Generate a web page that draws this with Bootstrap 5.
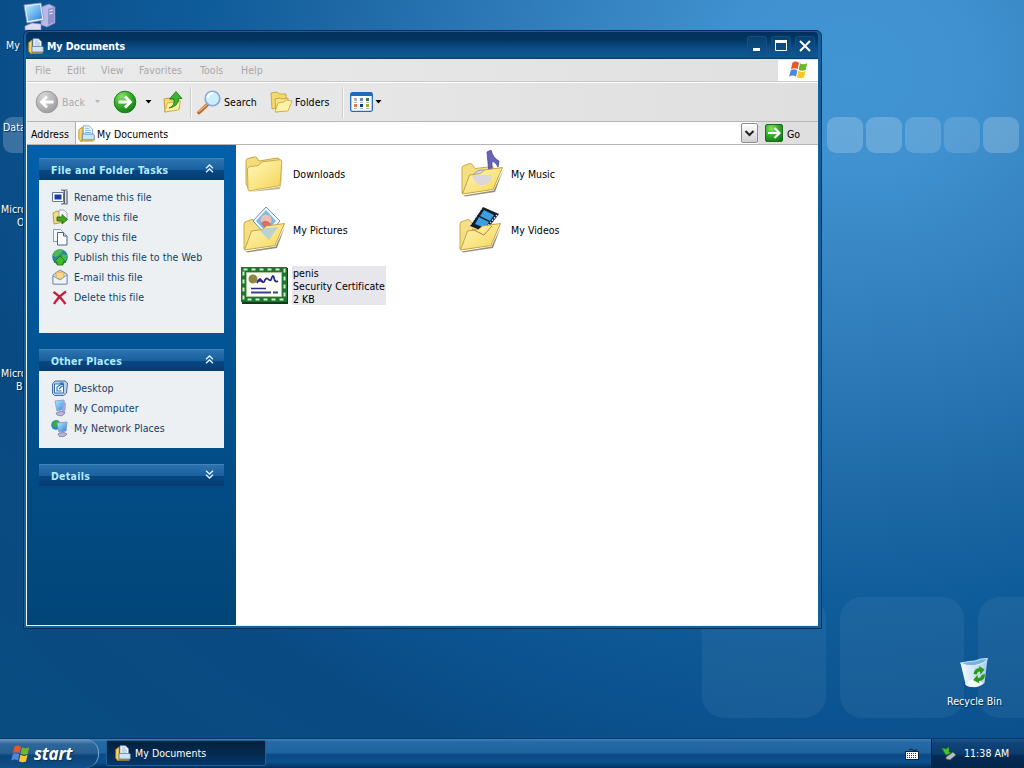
<!DOCTYPE html>
<html lang="en">
  <head>
    <meta charset="UTF-8" />
    <meta name="viewport" content="width=device-width, initial-scale=1.0" />
    <title>My Documents</title>
    <link
      href="https://cdn.jsdelivr.net/npm/bootstrap@5.3.3/dist/css/bootstrap.min.css"
      rel="stylesheet"
    />
    <style>
      body {
        width: 1024px;
        height: 768px;
        font-family: "DejaVu Sans Condensed", "DejaVu Sans", sans-serif;
        font-stretch: condensed;
        font-size: 10.5px;
        line-height: 13px;
        letter-spacing: 0.05px;
        color: #000;
        background: radial-gradient(ellipse 900px 750px at 850px 70px,
          #4295d3 0%, #3f91cf 14%, #3785c2 27%, #2b77b5 42%, #1c67a4 58%, #0f5c9a 72%, #0b5390 87%, #0a4a83 100%, #094c80 125%);
      }
      svg { display: block; flex: none; }

      /* Wallpaper squares */
      .tile { position: absolute; background: rgba(255, 255, 255, .2); border-radius: 9px; width: 36px; height: 36px; top: 117px; }
      .tile-big { position: absolute; background: rgba(255, 255, 255, .055); border-radius: 22px; width: 124px; height: 121px; top: 597px; }
      .tile-cut { width: 46px; border-radius: 22px 0 0 22px; }

      /* Desktop icons */
      .desk { position: absolute; color: #fff; text-shadow: 1px 1px 1px #002a50; white-space: nowrap; }

      /* Explorer window */
      #explorer {
        position: absolute;
        left: 23px;
        top: 30px;
        width: 799px;
        height: 599px;
        padding: 1px 3px 2px 2px;
        border: 1px solid #032f5c;
        border-radius: 6px 6px 0 0;
        background: #14609c;
      }
      .title-bar {
        height: 27px;
        padding: 1px 3px 0 2px;
        border-radius: 4px 4px 0 0;
        font-weight: bold;
        letter-spacing: -0.05px;
        color: #fff;
        background: linear-gradient(#02305c, #023561 28%, #0c4f89 62%, #115891 92%, #063a6b);
      }
      .win-btn { width: 20px; height: 20px; border: 1px solid #11508a; border-radius: 3px; background: linear-gradient(#07406f, #0f548d); }
      .win-body { height: 567px; border-left: 1px solid #f4f8fc; border-bottom: 1px solid #e6eef5; background: #fff; }
      .menu-row { height: 23px; color: #a9a9a9; background: linear-gradient(90deg, #ebebeb, #e0e0e0); border-bottom: 1px solid #c9c9c9; }
      .flag-box { width: 40px; height: 21px; background: #fff; }
      .tool-row { height: 40px; background: linear-gradient(90deg, #ebebeb, #dfdfdf); border-top: 1px solid #fff; border-bottom: 1px solid #b5b5b5; }
      .tool-sep { width: 1px; height: 31px; background: #cfcfcf; border-right: 1px solid #f8f8f8; box-sizing: content-box; }
      .addr-row { height: 23px; background: linear-gradient(90deg, #ebebeb, #dfdfdf); border-bottom: 1px solid #b5b5b5; }
      .addr-row span { padding-top: 2px; }
      .addr-field { width: 683px; height: 22px; background: #fff; border-left: 1px solid #b0b0b0; }
      .drop-btn { width: 17px; height: 20px; border: 1px solid #8c8c8c; border-radius: 2px; background: linear-gradient(#fff, #d0d0d0); }

      /* Task pane */
      .task-pane { width: 209px; padding: 13px 12px 0; background: linear-gradient(#0160a9, #024c86 70%, #024678); }
      .task-head {
        height: 22px;
        padding: 1px 10px 0 12px;
        font-weight: bold;
        letter-spacing: 0.28px;
        color: #b4ecff;
        border-top: 1px solid #3f83bb;
        background: linear-gradient(#2d73b0, #19609f 50%, #084783 54%, #063b72);
      }
      .task-list { padding: 7px 12px; background: #ecf0f2; color: #0f3f68; letter-spacing: 0.09px; }
      .task-list div { height: 20px; }
      .task-list span { margin-left: 5px; }
      .tasks-a { height: 153px; }
      .tasks-b { height: 77px; }

      .file-area { padding: 0 4px; }
      .file-item { height: 56px; padding-top: 2px; }
      .picked { width: 94px; height: 39px; background: #e6e6ec; padding-left: 1px; }
      .picked span { position: relative; top: 1px; }

      /* Taskbar */
      #taskbar {
        position: absolute;
        left: 0;
        bottom: 0;
        width: 1024px;
        height: 30px;
        color: #fff;
        border-top: 1px solid #0b3966;
        background: linear-gradient(#3b83bd, #2769a6 10%, #1f649f 48%, #0b4b86 52%, #0d508c 80%, #032f5a);
      }
      #start {
        width: 99px;
        height: 29px;
        border-radius: 0 14px 14px 0;
        border-right: 1px solid #79a9d0;
        background: linear-gradient(#6b9ac4, #2e669b 18%, #285f92 48%, #0c4479 58%, #11508a);
        font: italic bold 17px "Open Sans", sans-serif;
        letter-spacing: -0.2px;
        text-shadow: 1px 1px 1px #10304f;
      }
      .task-btn { width: 160px; height: 26px; margin: 1px 0 0 7px; border: 1px solid #1d5f99; background: linear-gradient(#02203f, #042a4f 50%, #03376a); border-radius: 2px; }
      .task-btn span { padding-top: 1px; }
      .tray { width: 93px; height: 29px; border-left: 1px solid #021e3b; background: linear-gradient(#1b568c, #0f4479 15%, #0b3c6d 50%, #042a52 60%, #03264a); }
    </style>
  </head>
  <body class="position-relative overflow-hidden">

    <!--icon symbols start here-->
    <svg width="0" height="0" class="position-absolute">
      <defs>
        <linearGradient id="gold" x1="0" y1="0" x2="1" y2="1">
          <stop offset="0" stop-color="#fff8bd" />
          <stop offset="1" stop-color="#f6d455" />
        </linearGradient>
        <linearGradient id="screen" x1="0" y1="0" x2="1" y2="1">
          <stop offset="0" stop-color="#b8f0ff" />
          <stop offset="1" stop-color="#2c7fe0" />
        </linearGradient>
        <linearGradient id="bin" x1="0" y1="0" x2="1" y2="0">
          <stop offset="0" stop-color="#f4faff" />
          <stop offset="1" stop-color="#a8cdec" />
        </linearGradient>
        <radialGradient id="green" cx=".35" cy=".25" r=".85">
          <stop offset="0" stop-color="#8be06a" />
          <stop offset=".5" stop-color="#35ab2c" />
          <stop offset="1" stop-color="#117513" />
        </radialGradient>
        <radialGradient id="grey" cx=".35" cy=".25" r=".85">
          <stop offset="0" stop-color="#d8d8d8" />
          <stop offset="1" stop-color="#989898" />
        </radialGradient>
      </defs>
      <symbol id="docs" viewBox="0 0 16 16">
        <path d="M.8 4.500L4 2v13H2.500L.8 13.500z" fill="#fbd863" stroke="#b98a22" stroke-width=".8" />
        <path d="M5 .8h5.500l3 3V10H5z" fill="#fff" stroke="#7d93b5" stroke-width=".8" />
        <path d="M6.500 3h4M6.500 5h5.500M6.500 7h5.500" stroke="#7fb2e8" />
        <path d="M4 8.500h10.500l.8 1v4.500H4z" fill="#cfe3fa" stroke="#5f7dab" stroke-width=".8" />
        <path d="M2 15h12.500" stroke="#d29f2c" stroke-width="1.300" />
      </symbol>
      <symbol id="flag" viewBox="0 0 20 18">
        <path d="M4.500 1.500C7 0 9 .5 11 1.800L9.600 8.200C7.500 7 5.500 7 3 8.200z" fill="#e8562a" />
        <path d="M12 2.300c2.500 1.200 4.500 1.200 7.300 0L17.700 9c-2.600 1.200-4.800 1-7.100-.3z" fill="#70b52c" />
        <path d="M2.800 9.200c2.500-1.300 4.500-1 6.600.2L8 15.700c-2.200-1.400-4.200-1.400-6.900-.2z" fill="#4d86dc" />
        <path d="M10.400 9.800c2.200 1.300 4.500 1.500 7.100.3L16 16.500c-2.600 1.200-4.800 1-7-.3z" fill="#fbc722" />
      </symbol>
      <symbol id="closed-folder" viewBox="0 0 40 40">
        <path d="M4 38l33-5.500 1.500-24L36 35z" fill="#8d7a3c" opacity=".55" />
        <path d="M2 7q0-2 2-2.500L10 3q2-.3 3 1l2 3 18-3q2.500 0 2.500 2v4L4 34 2 30z" fill="#f5dc78" stroke="#b69736" stroke-width=".8" />
        <path d="M3.500 15q0-2 2-2.300l9-1.200 3-3.500 18.500-2.300q2 0 1.800 2L36 31.500 5 37q-1 0-1-2z" fill="url(#gold)" stroke="#c8a53e" stroke-width=".9" />
      </symbol>
      <symbol id="folder-back" viewBox="0 0 46 48">
        <path d="M3 43L3 18q0-2 2-2.500l6-2q2 0 3 2l2 3 18-2V35z" fill="#f6df82" stroke="#b99b3b" stroke-width=".8" />
      </symbol>
      <symbol id="folder-front" viewBox="0 0 46 48">
        <path d="M4.500 45.500l30-5 9.500-20-8 21.500-30 4.500z" fill="#6e6335" opacity=".7" />
        <path d="M3.500 44l7-19 11-1.500 4-3.500L43.500 17.500 34 39.500z" fill="url(#gold)" stroke="#c09c35" stroke-width=".9" />
      </symbol>
      <symbol id="computer" viewBox="0 0 34 30">
        <path d="M19 5l8-3 6 3v16l-8 4-6-2z" fill="#b9b9e6" stroke="#7c7cb7" stroke-width=".7" />
        <path d="M26 7l6-2v15l-6 3z" fill="#8f91cd" />
        <path d="M27 9l4-1M27 12l4-1" stroke="#e6e6ff" />
        <path d="M2 3l17-2 3 17-17 3z" fill="#eef4ff" stroke="#8791c8" stroke-width=".8" />
        <path d="M3.500 4.500l14.500-2 2.200 14-14 2.500z" fill="url(#screen)" />
        <path d="M3 24l7-3 9 1v6H3z" fill="#dcdcf2" stroke="#8b8bb7" stroke-width=".6" />
      </symbol>
      <symbol id="chevrons" viewBox="0 0 9 9">
        <path d="M1 4.200L4.500 1 8 4.200M1 8.200L4.500 5 8 8.200" fill="none" stroke="#e0f6ff" stroke-width="1.300" />
      </symbol>
    </svg>
    <!--icon symbols end here-->

    <!--wallpaper-->
    <div class="tile" style="left: 3px"></div>
    <div class="tile" style="left: 827px"></div>
    <div class="tile" style="left: 866px"></div>
    <div class="tile" style="left: 905px; opacity: .8"></div>
    <div class="tile" style="left: 944px; opacity: .65"></div>
    <div class="tile" style="left: 983px"></div>
    <div class="tile-big" style="left: 702px"></div>
    <div class="tile-big" style="left: 840px"></div>
    <div class="tile-big tile-cut" style="left: 978px"></div>

    <!--desktop icons-->
    <svg class="desk" style="left: 22px; top: 2px" width="34" height="30"><use href="#computer" /></svg>
    <div class="desk" style="left: 6px; top: 39px">My</div>
    <div class="desk" style="left: 3px; top: 121px">Data</div>
    <div class="desk" style="left: 1px; top: 203px">Micro</div>
    <div class="desk" style="left: 17px; top: 216px">O</div>
    <div class="desk" style="left: 1px; top: 367px">Micro</div>
    <div class="desk" style="left: 16px; top: 380px">B</div>
    <div class="desk d-flex flex-column align-items-center" style="left: 947px; top: 657px">
      <svg width="32" height="32" viewBox="0 0 32 32">
        <path d="M2.500 6l11 2L29.500 2l-3 24q-5 5-13 4-5-1-6-3z" fill="url(#bin)" />
        <path d="M2.500 6q10-2 14-2 7-3 13-2.500-2 5-13 7-8 1-14-2.500z" fill="#79b1e5" stroke="#eef8ff" stroke-width=".8" />
        <path d="M7 27l9-6 9 5q-4 4-11 4-5 0-7-3z" fill="#f5fbff" />
        <path d="M15.500 17q1-6 6-6l-.5-2 5.500 3.500-4 5-.5-3q-3 0-3 3zM27 17q0 7-6 7l.5 2.500-6.500-3.500 4.500-5 .5 3q3 0 3.500-3z" fill="#2c9a16" />
      </svg>
      <div style="margin-top: 6px">Recycle Bin</div>
    </div>

    <!--explorer window start here-->
    <div id="explorer">
      <div class="title-bar d-flex align-items-center">
        <svg width="16" height="16"><use href="#docs" /></svg>
        <span class="me-auto" style="margin-left: 3px">My Documents</span>
        <div class="d-flex" style="gap: 4px">
          <div class="win-btn"><svg width="18" height="18"><path d="M5 12.500h7" stroke="#fff" stroke-width="3" /></svg></div>
          <div class="win-btn"><svg width="18" height="18"><path d="M3.500 4v9.500h11V4" fill="none" stroke="#fff" /><path d="M3 4.500h12" stroke="#fff" stroke-width="3" /></svg></div>
          <div class="win-btn"><svg width="18" height="18"><path d="M4 4l10 10M14 4L4 14" stroke="#fff" stroke-width="2" /></svg></div>
        </div>
      </div>

      <div class="win-body d-flex flex-column">
        <div class="menu-row d-flex align-items-center">
          <div class="d-flex flex-fill">
            <span style="width: 32px; margin-left: 8px">File</span>
            <span style="width: 34px">Edit</span>
            <span style="width: 38px">View</span>
            <span style="width: 61px">Favorites</span>
            <span style="width: 41px">Tools</span>
            <span>Help</span>
          </div>
          <div class="flag-box d-flex justify-content-center align-items-center">
            <svg width="20" height="18"><use href="#flag" /></svg>
          </div>
        </div>

        <div class="tool-row d-flex align-items-center">
          <svg width="24" height="24" viewBox="0 0 24 24" style="margin-left: 8px">
            <circle cx="12" cy="12" r="10.800" fill="url(#grey)" stroke="#9b9b9b" />
            <path d="M18.500 12H7M12 6.500L6.500 12l5.500 5.500" fill="none" stroke="#fff" stroke-width="2.800" />
          </svg>
          <span style="width: 32px; margin-left: 3px; color: #ababab">Back</span>
          <svg width="7" height="4"><path d="M1 0h5L3.500 3z" fill="#b5b5b5" /></svg>
          <svg width="24" height="24" viewBox="0 0 24 24" style="margin-left: 12px">
            <circle cx="12" cy="12" r="10.800" fill="url(#green)" stroke="#1d7f1c" />
            <path d="M5.500 12H17M12 6.500l5.500 5.500-5.500 5.500" fill="none" stroke="#fff" stroke-width="2.800" />
          </svg>
          <svg width="7" height="4" style="margin-left: 8px"><path d="M.5 0h6l-3 3.500z" fill="#000" /></svg>
          <svg width="21" height="24" viewBox="0 0 21 24" style="margin-left: 11px">
            <path d="M1 9l5-1 2 2 8-1v10L2 22z" fill="#f5dc70" stroke="#b58f2b" stroke-width=".8" />
            <path d="M1.500 22l3-9 13-2-2 9z" fill="#fff1a0" stroke="#c9a53b" stroke-width=".8" />
            <path d="M6 18q6-2 5-9H6.500L13 1.500 19 8.500h-3.500Q16 16 6 18z" fill="#3cb52f" stroke="#187414" stroke-width=".8" />
          </svg>
          <div class="tool-sep" style="margin-left: 6px"></div>
          <svg width="26" height="26" viewBox="0 0 26 26" style="margin-left: 5px">
            <path d="M10.500 15.500L2 23.500" stroke="#b5672a" stroke-width="3.600" stroke-linecap="round" />
            <path d="M10 15.500L2 22.500" stroke="#f0b070" stroke-width="1.400" stroke-linecap="round" />
            <circle cx="15.500" cy="9.500" r="7.300" fill="#cdeffd" stroke="#86a9dc" stroke-width="1.600" />
            <path d="M10.500 9q1-5 6-5" fill="none" stroke="#fff" stroke-width="2.500" />
          </svg>
          <span style="width: 45px; margin-left: 1px">Search</span>
          <svg width="24" height="24" viewBox="0 0 24 24">
            <path d="M2 3l6-1 2 2h7v12L3 19z" fill="#f5d96a" stroke="#c39b2e" stroke-width=".8" />
            <path d="M6 9l5-1 2 1 6-1v12L7 22z" fill="#f9e283" stroke="#c39b2e" stroke-width=".8" />
            <path d="M6 22l3-9 6-1 2-2 6 1-4 10z" fill="#fff3a5" stroke="#c9a53b" stroke-width=".8" />
          </svg>
          <span style="width: 45px; margin-left: 2px">Folders</span>
          <div class="tool-sep" style="margin-left: 2px"></div>
          <svg width="23" height="20" viewBox="0 0 23 20" style="margin-left: 6px">
            <rect x=".7" y=".7" width="21.600" height="18.600" rx="1.500" fill="#fff" stroke="#2468b8" stroke-width="1.300" />
            <path d="M1 2.500h21" stroke="#2468b8" stroke-width="3" />
            <path d="M4 7.500h3" stroke="#a7b0c8" stroke-width="3" />
            <path d="M4 13.500h3" stroke="#e07b45" stroke-width="3" />
            <path d="M10 7.500h3" stroke="#6688c8" stroke-width="3" />
            <path d="M10 13.500h3" stroke="#123a94" stroke-width="3" />
            <path d="M16 7.500h3" stroke="#268440" stroke-width="3" />
            <path d="M16 13.500h3" stroke="#b2a62b" stroke-width="3" />
            <path d="M4 10.500h3m3 0h3m3 0h3M4 16.500h3m3 0h3m3 0h3" stroke="#a9b8d0" />
          </svg>
          <svg width="7" height="4" style="margin-left: 2px"><path d="M.5 0h6l-3 3.500z" fill="#000" /></svg>
        </div>

        <div class="addr-row d-flex align-items-center">
          <span style="width: 44px; margin-left: 4px">Address</span>
          <div class="addr-field d-flex align-items-center">
            <svg width="17" height="17" style="margin-left: 2px"><use href="#docs" /></svg>
            <span class="me-auto" style="margin-left: 2px">My Documents</span>
            <div class="drop-btn"><svg width="15" height="18"><path d="M3.500 7l4 4 4-4" fill="none" stroke="#222" stroke-width="2" /></svg></div>
          </div>
          <svg width="18" height="18" viewBox="0 0 18 18" style="margin-left: 7px">
            <rect x=".5" y=".5" width="17" height="17" rx="1.500" fill="url(#green)" stroke="#177018" />
            <path d="M3 9h11M9.500 4l5 5-5 5" fill="none" stroke="#fff" stroke-width="2.200" />
          </svg>
          <span style="margin-left: 4px">Go</span>
        </div>

        <div class="d-flex flex-fill">
          <div class="task-pane">
            <div class="task-head d-flex align-items-center justify-content-between">
              <span>File and Folder Tasks</span>
              <svg class="mb-1" width="9" height="9"><use href="#chevrons" /></svg>
            </div>
            <div class="task-list tasks-a">
              <div class="d-flex align-items-center">
                <svg width="18" height="18" viewBox="0 0 18 18">
                  <path d="M1.500 4.500h11v9h-11z" fill="#fff" stroke="#5f7898" />
                  <path d="M3.500 6.500h7v5h-7z" fill="#153f9f" />
                  <path d="M10 2h2l1 1 1-1h2.500M10 16h2l1-1 1 1h2.500M13.500 3v12M16 3v13" fill="none" stroke="#56606c" stroke-width="1.200" />
                </svg>
                <span>Rename this file</span>
              </div>
              <div class="d-flex align-items-center">
                <svg width="18" height="18" viewBox="0 0 18 18">
                  <path d="M2 5l4-2 2 1 5-1v11L3 16z" fill="#f4dd82" stroke="#9c8b48" stroke-width=".8" />
                  <path d="M8 2h5l3 3v6H8z" fill="#f5f7fb" stroke="#8998ac" stroke-width=".8" />
                  <path d="M6 9h5V6.500l5.500 5L11 16v-3H6z" fill="#43a51f" stroke="#1d6510" stroke-width=".8" />
                </svg>
                <span>Move this file</span>
              </div>
              <div class="d-flex align-items-center">
                <svg width="18" height="18" viewBox="0 0 18 18">
                  <path d="M2.500 1.500h7l2 2v10h-9z" fill="#f4f8fd" stroke="#8d9fb8" />
                  <path d="M6.500 4.500h6l3.500 3.500v9H6.500z" fill="#fff" stroke="#46658d" />
                  <path d="M12.500 4.500V8H16" fill="#cfe0f2" stroke="#46658d" />
                </svg>
                <span>Copy this file</span>
              </div>
              <div class="d-flex align-items-center">
                <svg width="18" height="18" viewBox="0 0 18 18">
                  <circle cx="9" cy="9" r="7.800" fill="#2f80a8" />
                  <path d="M3 4q4-4 9-2l-2 4-5 3-3-1zM11 6l5 1-1 6-4-2z" fill="#49bc4c" />
                  <path d="M9 8l6 6h-3v3H6v-3H3z" fill="#43bd26" stroke="#17700f" stroke-width=".8" />
                </svg>
                <span class="text-nowrap">Publish this file to the Web</span>
              </div>
              <div class="d-flex align-items-center">
                <svg width="18" height="18" viewBox="0 0 18 18">
                  <path d="M2 7l7-5 7 4v10H2z" fill="#d6e4f5" stroke="#6f85a6" stroke-width=".9" />
                  <path d="M5 4h8v7H5z" fill="#f8d789" stroke="#c28e45" stroke-width=".7" />
                  <path d="M2 8l7 4 7-5v9H2z" fill="#eef5fd" stroke="#7289ab" stroke-width=".8" />
                </svg>
                <span>E-mail this file</span>
              </div>
              <div class="d-flex align-items-center">
                <svg width="18" height="18" viewBox="0 0 18 18">
                  <path d="M2.500 4Q9 8 14.500 16M15 3.500Q7 9 3 16" fill="none" stroke="#c41e3d" stroke-width="2.300" />
                </svg>
                <span>Delete this file</span>
              </div>
            </div>

            <div class="task-head d-flex align-items-center justify-content-between" style="margin-top: 16px">
              <span>Other Places</span>
              <svg class="mb-1" width="9" height="9"><use href="#chevrons" /></svg>
            </div>
            <div class="task-list tasks-b">
              <div class="d-flex align-items-center">
                <svg width="18" height="18" viewBox="0 0 18 18">
                  <path d="M4 2h10l2.500 2-1 10-3 2.500H3.500l-2-2V5z" fill="#b9d3ec" stroke="#4a6f97" />
                  <path d="M3.500 5h9v9h-9z" fill="#fff" stroke="#2a6faf" />
                  <path d="M10.500 12H6V8l6-4M8.500 4H12v4M8 10l3-3" fill="none" stroke="#2673b9" stroke-width="1.100" />
                </svg>
                <span>Desktop</span>
              </div>
              <div class="d-flex align-items-center">
                <svg width="18" height="18" viewBox="0 0 18 18">
                  <path d="M4 2l9-1 1 9-8 2z" fill="url(#screen)" stroke="#9aa6ce" />
                  <path d="M12 3l3 1-1 10-3 1z" fill="#a4a6d2" />
                  <path d="M5 14l5-2 4 2-3 3-5-1z" fill="#b5b8d7" stroke="#72759c" stroke-width=".7" />
                </svg>
                <span>My Computer</span>
              </div>
              <div class="d-flex align-items-center">
                <svg width="18" height="18" viewBox="0 0 18 18">
                  <circle cx="5" cy="6" r="4.800" fill="#2586c6" />
                  <path d="M1 5q2-4 6-4l1 4-4 4z" fill="#3daa3a" />
                  <path d="M6 4l10-1-1 9-7 1z" fill="url(#screen)" stroke="#8ca0cc" />
                  <path d="M7 15l5-2 4 2-2 2-5 1z" fill="#b5b8d7" stroke="#666b8d" stroke-width=".7" />
                </svg>
                <span>My Network Places</span>
              </div>
            </div>

            <div class="task-head d-flex align-items-center justify-content-between" style="margin-top: 16px">
              <span>Details</span>
              <svg class="mb-1" width="9" height="9" viewBox="0 0 9 9"><path d="M1 .8L4.500 4 8 .8M1 4.800L4.500 8 8 4.800" fill="none" stroke="#e0f6ff" stroke-width="1.300" /></svg>
            </div>
          </div>

          <div class="file-area flex-fill">
            <div class="d-flex">
              <div class="file-item d-flex align-items-center" style="width: 218px">
                <svg width="48" height="48" viewBox="-4 -4 48 48"><use href="#closed-folder" width="40" height="40" /></svg>
                <span style="margin-left: 5px">Downloads</span>
              </div>
              <div class="file-item d-flex align-items-center">
                <svg width="48" height="48">
                  <use href="#folder-back" x="1" width="46" height="48" />
                  <ellipse cx="24" cy="29" rx="10" ry="9" fill="#d8d5f4" stroke="#9a98c8" />
                  <path d="M29 2l4-2q2 8 8 11l-1 6q-2-5-6-6v16q-3 5-7 3-1-5 4-6z" fill="#6a62b8" stroke="#413c8b" stroke-width=".7" />
                  <use href="#folder-front" x="1" width="46" height="48" />
                  <path d="M14 25h20l-2 6q-4 5-10 4-6-2-8-10z" fill="#d4d2f2" opacity=".8" />
                </svg>
                <span style="margin-left: 5px">My Music</span>
              </div>
            </div>
            <div class="d-flex">
              <div class="file-item d-flex align-items-center" style="width: 218px">
                <svg width="48" height="48">
                  <use href="#folder-back" x="1" width="46" height="48" />
                  <path d="M26 1l14 14-13 15-14-15z" fill="#f4faff" stroke="#6793bc" />
                  <path d="M26 4l10 11-10 11-10-11z" fill="#7bb9e8" />
                  <circle cx="26" cy="14" r="5.500" fill="#eebfb5" />
                  <path d="M21 17q5-5 10 1l-5 6z" fill="#d9594b" opacity=".8" />
                  <use href="#folder-front" x="1" width="46" height="48" />
                  <path d="M20 25l6-3 12-1-9 13z" fill="#a3cbe8" opacity=".75" />
                </svg>
                <span style="margin-left: 5px">My Pictures</span>
              </div>
              <div class="file-item d-flex align-items-center">
                <svg width="48" height="48">
                  <use href="#folder-back" x="-1" width="46" height="48" />
                  <path d="M25 1l16 7-14 18-15-6z" fill="#111c2c" />
                  <path d="M26 4l10 5-4 6-10-5zM21 11l10 5-4 6-10-4z" fill="#3c9fe0" />
                  <path d="M23.500 2.500l-11 16M39 9L26 24" stroke="#e4eefc" stroke-width="1.300" stroke-dasharray="1.500 1.500" />
                  <use href="#folder-front" x="-1" width="46" height="48" />
                  <path d="M14 23l12 6 8-9" fill="none" stroke="#b48734" />
                </svg>
                <span style="margin-left: 5px">My Videos</span>
              </div>
            </div>
            <div class="file-item d-flex align-items-center pt-0">
              <svg width="48" height="48">
                <path d="M2 7h46v36H2z" fill="#0c3d14" />
                <path d="M1 6h46v35H1z" fill="#1d7330" />
                <path d="M3.500 8.500h41v30h-41z" fill="none" stroke="#d3ecca" stroke-width="2" stroke-dasharray="4 4" />
                <path d="M6.500 11.500h35v24h-35z" fill="#fffef4" stroke="#a5c79a" />
                <circle cx="13" cy="18" r="4.500" fill="#8c8546" />
                <path d="M17 22q3-6 4-3t3 2q2-5 4-3t3 1q2-7 3-2t4 3M17 20h6" fill="none" stroke="#2a2390" stroke-width="1.700" />
                <path d="M11 27.500h15" stroke="#252c80" stroke-width="1.500" />
                <path d="M11 31.500h20M33 31.500h5" stroke="#3c4390" stroke-width="2" />
              </svg>
              <div class="picked d-flex flex-column" style="margin-left: 4px">
                <span>penis</span>
                <span class="text-nowrap">Security Certificate</span>
                <span>2 KB</span>
              </div>
            </div>
          </div>
        </div>
      </div>
    </div>
    <!--explorer window end here-->

    <!--taskbar start here-->
    <div id="taskbar" class="d-flex">
      <div id="start" class="d-flex align-items-center">
        <svg width="20" height="18" style="margin-left: 10px"><use href="#flag" /></svg>
        <span style="margin-left: 4px">start</span>
      </div>
      <div class="task-btn d-flex align-items-center">
        <svg width="16" height="16" style="margin-left: 8px"><use href="#docs" /></svg>
        <span class="ms-1">My Documents</span>
      </div>
      <div class="ms-auto d-flex align-items-center">
        <svg width="14" height="14" viewBox="0 0 14 14" style="margin-right: 12px">
          <path d="M4 3q2-2 4 0t4-1" fill="none" stroke="#0a2340" />
          <rect x=".5" y="4.500" width="13" height="8" fill="#fff" stroke="#10253c" />
          <path d="M2 6.500h10M2 8.500h10M2 10.500h10" stroke="#26394f" stroke-dasharray="1 1" />
        </svg>
        <div class="tray d-flex align-items-center">
          <svg width="16" height="16" viewBox="0 0 16 16" style="margin-left: 9px">
            <path d="M5 11l7-5 3 3-6 5-4-1z" fill="#b6bcc2" stroke="#4c5660" stroke-width=".8" />
            <path d="M1 2l4 1 3-2v5l2 1-5 2-2-3z" fill="#46c22e" stroke="#1b7f15" stroke-width=".6" />
          </svg>
          <span class="text-nowrap" style="margin-left: 7px">11:38 AM</span>
        </div>
      </div>
    </div>
    <!--taskbar end here-->

    <script src="https://cdn.jsdelivr.net/npm/bootstrap@5.3.3/dist/js/bootstrap.bundle.min.js"></script>
  </body>
</html>
